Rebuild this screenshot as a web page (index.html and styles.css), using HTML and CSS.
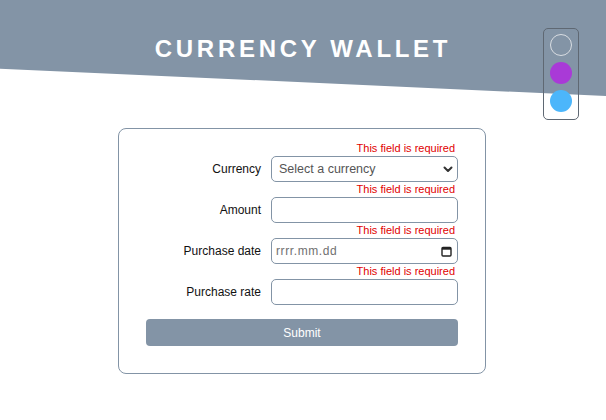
FILE: index.html
```html
<!DOCTYPE html>
<html lang="en">
<head>
<meta charset="utf-8">
<title>Currency Wallet</title>
<link rel="stylesheet" href="styles.css">
</head>
<body>
<header class="hero">
  <h1 class="title">CURRENCY WALLET</h1>
</header>
<div class="themes">
  <button class="swatch swatch-gray" aria-label="Gray theme"></button>
  <button class="swatch swatch-purple" aria-label="Purple theme"></button>
  <button class="swatch swatch-blue" aria-label="Blue theme"></button>
</div>
<main class="page">
  <form class="card">
    <span class="error">This field is required</span>
    <label class="label" for="currency">Currency</label>
    <div class="field">
      <select id="currency" class="control select">
        <option>Select a currency</option>
      </select>
      <svg class="chev" width="10" height="7" viewBox="0 0 10 7"><path d="M1.5 1.5 L5 5 L8.5 1.5" fill="none" stroke="#333" stroke-width="2" stroke-linecap="round" stroke-linejoin="round"/></svg>
    </div>

    <span class="error">This field is required</span>
    <label class="label" for="amount">Amount</label>
    <div class="field">
      <input id="amount" class="control" type="text">
    </div>

    <span class="error">This field is required</span>
    <label class="label" for="date">Purchase date</label>
    <div class="field">
      <input id="date" class="control date" type="text" placeholder="rrrr.mm.dd">
      <svg class="cal" width="11" height="11" viewBox="0 0 11 11"><rect x="1" y="1.5" width="9" height="8.5" rx="1" fill="none" stroke="#222" stroke-width="1.4"/><rect x="1" y="1.5" width="9" height="2.2" fill="#222"/></svg>
    </div>

    <span class="error">This field is required</span>
    <label class="label" for="rate">Purchase rate</label>
    <div class="field">
      <input id="rate" class="control" type="text">
    </div>

    <button class="submit" type="button">Submit</button>
  </form>
</main>
</body>
</html>
```

FILE: styles.css
```css
* { box-sizing: border-box; }

html, body {
  margin: 0;
  padding: 0;
  background: #ffffff;
  font-family: "Liberation Sans", Arial, sans-serif;
}

body {
  position: relative;
}

.hero {
  height: 96px;
  background: #8394a6;
  clip-path: polygon(0 0, 100% 0, 100% 100%, 0 71.5%);
  padding-top: 35px;
  display: flex;
  justify-content: center;
}

.title {
  margin: 0;
  font-size: 24px;
  line-height: 28px;
  font-weight: bold;
  letter-spacing: 3.7px;
  color: #ffffff;
}

.themes {
  position: absolute;
  top: 28px;
  right: 27px;
  width: 36px;
  height: 92px;
  border: 1px solid #5f6873;
  border-radius: 5px;
  padding: 5px 6px;
  display: flex;
  flex-direction: column;
  align-items: center;
  gap: 6px;
}

.swatch {
  width: 22px;
  height: 22px;
  border-radius: 50%;
  border: none;
  padding: 0;
  flex: none;
}

.swatch-gray {
  background: #8394a6;
  border: 1.5px solid #d9dde2;
}

.swatch-purple { background: #a93ad7; }
.swatch-blue { background: #4cb6fb; }

.page {
  padding-top: 32px;
  padding-right: 2px;
}

.card {
  width: 368px;
  margin: 0 auto;
  border: 1px solid #8394a6;
  border-radius: 8px;
  padding: 12px 27px 27px 27px;
  display: grid;
  grid-template-columns: 115px 187px;
  column-gap: 10px;
  align-items: center;
}

.error {
  grid-column: 2;
  font-size: 11px;
  line-height: 15px;
  color: #e10000;
  text-align: right;
  padding-right: 3px;
}

.label {
  grid-column: 1;
  font-size: 12px;
  color: #111;
  text-align: right;
}

.field {
  grid-column: 2;
  height: 26px;
  border: 1px solid #8394a6;
  border-radius: 5px;
  display: flex;
  align-items: center;
  background: #fff;
}

.control {
  flex: 1;
  min-width: 0;
  height: 100%;
  border: none;
  background: transparent;
  outline: none;
  font-family: "Liberation Sans", Arial, sans-serif;
  font-size: 12px;
  padding: 0 4px;
}

.select {
  appearance: none;
  -webkit-appearance: none;
  color: #555;
  padding-left: 7px;
  font-size: 12.5px;
}

.chev {
  margin-right: 4px;
  flex: none;
}

.date::placeholder {
  color: #707070;
  letter-spacing: 0.6px;
}

.date {
  padding-left: 4px;
}

.cal {
  margin-right: 5px;
  flex: none;
}

.submit {
  grid-column: 1 / -1;
  margin-top: 14px;
  height: 27px;
  border: none;
  border-radius: 4px;
  background: #8394a6;
  color: #ffffff;
  font-family: "Liberation Sans", Arial, sans-serif;
  font-size: 12px;
  font-weight: normal;
}
```
